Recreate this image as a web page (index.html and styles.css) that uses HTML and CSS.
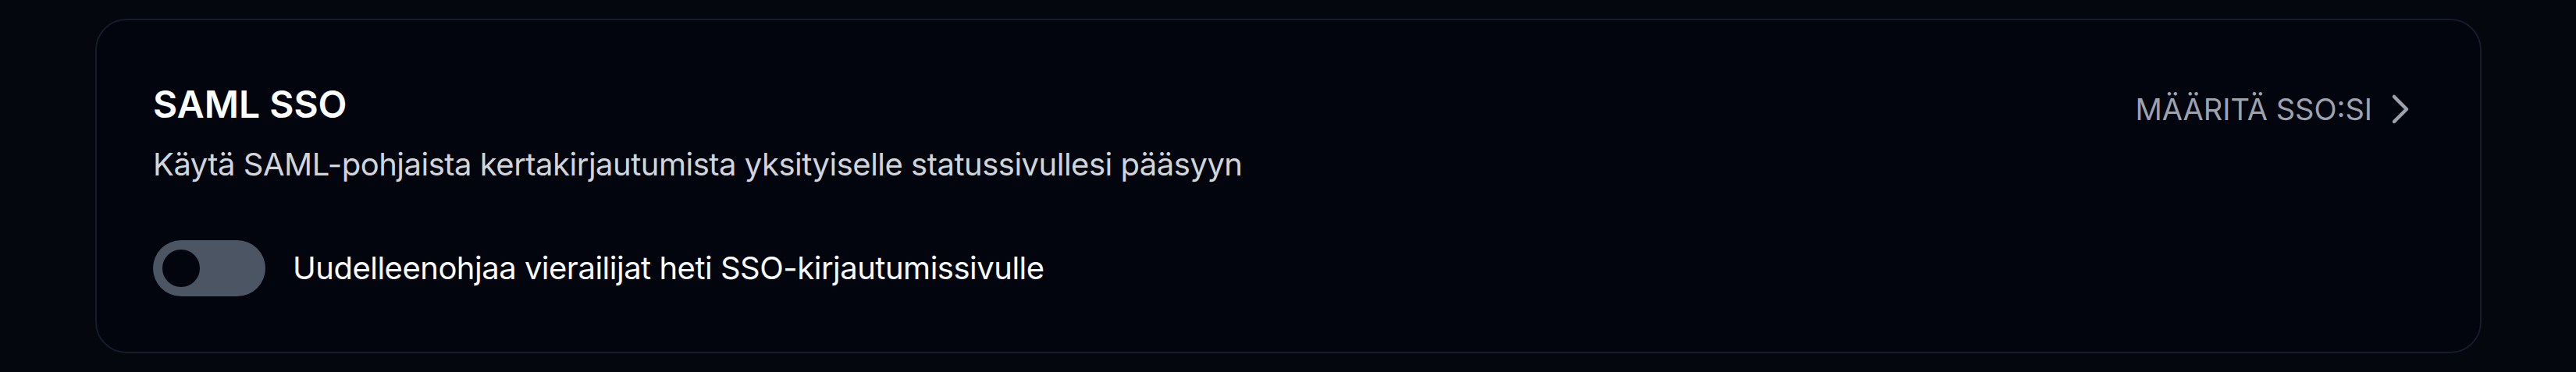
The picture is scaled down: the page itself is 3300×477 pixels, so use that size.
FILE: index.html
```html
<!DOCTYPE html>
<html lang="fi">
<head>
<meta charset="utf-8">
<title>SAML SSO</title>
<link rel="stylesheet" href="styles.css">
</head>
<body>
<main class="page">
  <section class="card">
    <div class="card-header">
      <div class="intro">
        <h2 class="title">SAML SSO</h2>
        <p class="desc">Käytä SAML-pohjaista kertakirjautumista yksityiselle statussivullesi pääsyyn</p>
      </div>
      <a class="setup-link" href="#">
        <span>MÄÄRITÄ SSO:SI</span>
        <svg class="chevron" width="24" height="40" viewBox="0 0 24 40" aria-hidden="true">
          <polyline points="4,4 20,20 4,36" fill="none" stroke="currentColor" stroke-width="4.5" stroke-linecap="round" stroke-linejoin="round"/>
        </svg>
      </a>
    </div>
    <div class="toggle-row">
      <button class="toggle" type="button" aria-pressed="false"><span class="knob"></span></button>
      <span class="toggle-label">Uudelleenohjaa vierailijat heti SSO-kirjautumissivulle</span>
    </div>
  </section>
</main>
</body>
</html>
```

FILE: styles.css
```css
html, body {
  margin: 0;
  padding: 0;
  background: #05070f;
}

body {
  font-family: Inter, "Noto Sans", "Liberation Sans", sans-serif;
  -webkit-font-smoothing: antialiased;
}

.page {
  padding: 24px 121px 24px 122px;
}

.card {
  border: 2px solid #161c2a;
  border-radius: 40px;
  background: #03050e;
  padding: 76px 90px 71px 72px;
}

.card-header {
  display: flex;
  justify-content: space-between;
  align-items: flex-start;
}

.intro {
  display: flex;
  flex-direction: column;
  gap: 17px;
}

.title {
  margin: 0;
  font-size: 48px;
  line-height: 64px;
  font-weight: 600;
  color: #ffffff;
}

.desc {
  margin: 0;
  font-size: 40px;
  line-height: 56px;
  font-weight: 400;
  letter-spacing: -0.5px;
  color: #d1d5db;
}

.setup-link {
  display: flex;
  align-items: center;
  gap: 24px;
  margin-top: 10px;
  color: #9ca3af;
  text-decoration: none;
  font-size: 38px;
  line-height: 56px;
  font-weight: 400;
}

.chevron {
  display: block;
}

.toggle-row {
  display: flex;
  align-items: center;
  gap: 35px;
  margin-top: 69px;
}

.toggle {
  display: flex;
  align-items: center;
  width: 144px;
  height: 72px;
  padding: 0 12px;
  border: none;
  border-radius: 36px;
  background: #4b5563;
  box-sizing: border-box;
}

.knob {
  width: 48px;
  height: 48px;
  border-radius: 50%;
  background: #03050e;
}

.toggle-label {
  font-size: 40px;
  line-height: 56px;
  letter-spacing: -0.5px;
  color: #f9fafb;
}
```
